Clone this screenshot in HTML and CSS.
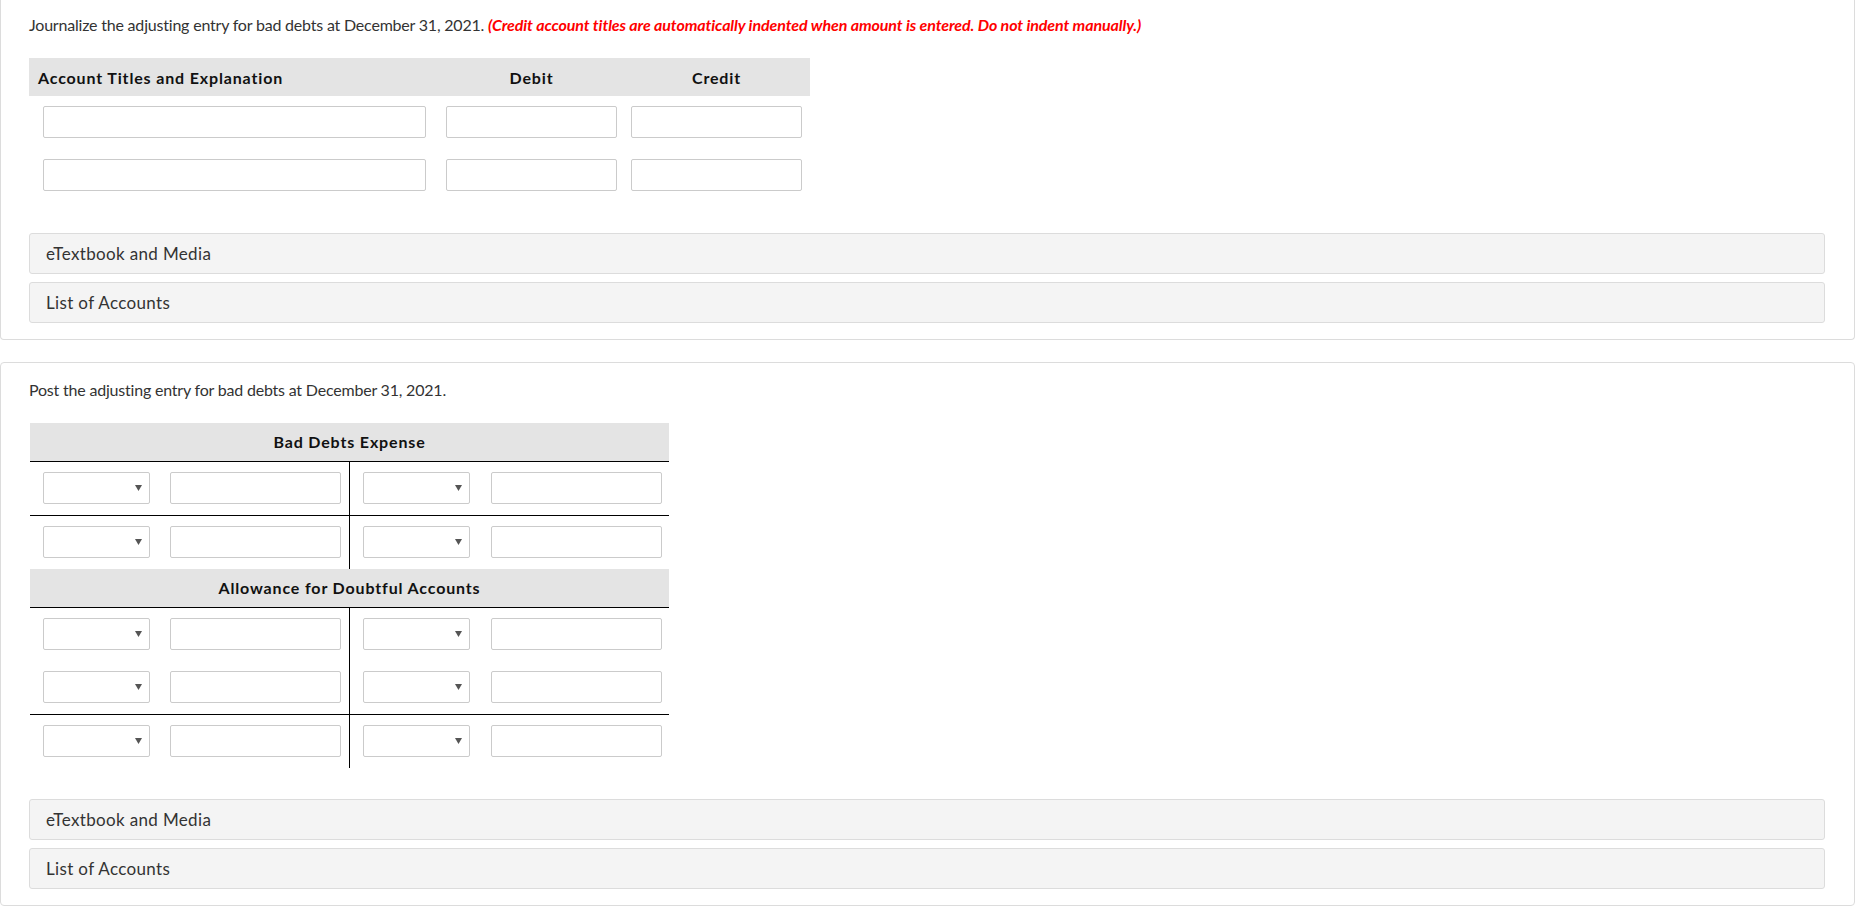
FILE: index.html
```html
<!DOCTYPE html>
<html lang="en">
<head>
<meta charset="utf-8">
<title>Adjusting entry for bad debts</title>
<link rel="stylesheet" href="styles.css">
</head>
<body>
<div class="page">
  <section class="card card-first">
    <p class="prompt">Journalize the adjusting entry for bad debts at December 31, 2021. <em class="note">(Credit account titles are automatically indented when amount is entered. Do not indent manually.)</em></p>

    <div class="journal">
      <div class="j-head">
        <div class="jh-account">Account Titles and Explanation</div>
        <div class="jh-amount">Debit</div>
        <div class="jh-amount jh-credit">Credit</div>
      </div>
      <div class="j-row">
        <div class="field f-account"></div>
        <div class="field f-amount"></div>
        <div class="field f-amount f-credit"></div>
      </div>
      <div class="j-row">
        <div class="field f-account"></div>
        <div class="field f-amount"></div>
        <div class="field f-amount f-credit"></div>
      </div>
    </div>

    <div class="panels">
      <div class="panel">eTextbook and Media</div>
      <div class="panel">List of Accounts</div>
    </div>
  </section>

  <section class="card card-second">
    <p class="prompt">Post the adjusting entry for bad debts at December 31, 2021.</p>

    <div class="taccounts">
      <div class="t-head">Bad Debts Expense</div>
      <div class="t-row t-line">
        <div class="t-side t-left"><div class="field f-select"><svg class="caret" width="7" height="6" viewBox="0 0 7 6"><path d="M0 0h7L3.5 6z" fill="#555"/></svg></div><div class="field f-amt"></div></div>
        <div class="t-side t-right"><div class="field f-select"><svg class="caret" width="7" height="6" viewBox="0 0 7 6"><path d="M0 0h7L3.5 6z" fill="#555"/></svg></div><div class="field f-amt"></div></div>
      </div>
      <div class="t-row">
        <div class="t-side t-left"><div class="field f-select"><svg class="caret" width="7" height="6" viewBox="0 0 7 6"><path d="M0 0h7L3.5 6z" fill="#555"/></svg></div><div class="field f-amt"></div></div>
        <div class="t-side t-right"><div class="field f-select"><svg class="caret" width="7" height="6" viewBox="0 0 7 6"><path d="M0 0h7L3.5 6z" fill="#555"/></svg></div><div class="field f-amt"></div></div>
      </div>

      <div class="t-head">Allowance for Doubtful Accounts</div>
      <div class="t-row">
        <div class="t-side t-left"><div class="field f-select"><svg class="caret" width="7" height="6" viewBox="0 0 7 6"><path d="M0 0h7L3.5 6z" fill="#555"/></svg></div><div class="field f-amt"></div></div>
        <div class="t-side t-right"><div class="field f-select"><svg class="caret" width="7" height="6" viewBox="0 0 7 6"><path d="M0 0h7L3.5 6z" fill="#555"/></svg></div><div class="field f-amt"></div></div>
      </div>
      <div class="t-row t-line">
        <div class="t-side t-left"><div class="field f-select"><svg class="caret" width="7" height="6" viewBox="0 0 7 6"><path d="M0 0h7L3.5 6z" fill="#555"/></svg></div><div class="field f-amt"></div></div>
        <div class="t-side t-right"><div class="field f-select"><svg class="caret" width="7" height="6" viewBox="0 0 7 6"><path d="M0 0h7L3.5 6z" fill="#555"/></svg></div><div class="field f-amt"></div></div>
      </div>
      <div class="t-row">
        <div class="t-side t-left"><div class="field f-select"><svg class="caret" width="7" height="6" viewBox="0 0 7 6"><path d="M0 0h7L3.5 6z" fill="#555"/></svg></div><div class="field f-amt"></div></div>
        <div class="t-side t-right"><div class="field f-select"><svg class="caret" width="7" height="6" viewBox="0 0 7 6"><path d="M0 0h7L3.5 6z" fill="#555"/></svg></div><div class="field f-amt"></div></div>
      </div>
    </div>

    <div class="panels">
      <div class="panel">eTextbook and Media</div>
      <div class="panel">List of Accounts</div>
    </div>
  </section>
</div>
</body>
</html>
```

FILE: styles.css
```css
* { box-sizing: border-box; }

html, body {
  margin: 0;
  padding: 0;
  background: #fff;
}

body {
  font-family: Lato, "Open Sans", Arial, sans-serif;
  color: #333;
  font-size: 16px;
}

.page {
  width: 1855px;
  display: flex;
  flex-direction: column;
  gap: 22px;
}

.card {
  border: 1px solid #dcdcdc;
  border-radius: 4px;
  padding: 16px 29px 16px 28px;
  background: #fff;
}

.card-first {
  border-top: none;
  border-radius: 0 0 4px 4px;
  padding-top: 15px;
}

.card-second {
  padding-top: 17px;
}

.prompt {
  margin: 0;
  font-size: 16px;
  line-height: 1.2;
  color: #333;
  letter-spacing: -0.2px;
}

.note {
  color: #ff0000;
  font-weight: 700;
  font-style: italic;
  letter-spacing: -0.1px;
}

/* Journal table */
.journal {
  width: 781px;
  margin-top: 24px;
}

.j-head {
  height: 38px;
  background: #e4e4e4;
  display: flex;
  align-items: center;
  padding: 0 7px 0 9px;
  gap: 20px;
  font-weight: 700;
  color: #111;
  line-height: 1.2;
  letter-spacing: 0.85px;
}

.jh-account { width: 388px; }
.jh-amount { width: 171px; text-align: center; }
.jh-credit { margin-left: -6px; }

.j-row {
  display: flex;
  padding: 10px 7px 11px 14px;
  gap: 20px;
}

.field {
  height: 32px;
  border: 1px solid #cbcbcb;
  border-radius: 2px;
  background: #fff;
}

.f-account { width: 383px; }
.f-amount { width: 171px; }
.f-credit { margin-left: -6px; }

/* Panels */
.panels {
  margin-top: 31px;
  display: flex;
  flex-direction: column;
  gap: 8px;
}

.panel {
  background: #f4f4f4;
  border: 1px solid #dcdcdc;
  border-radius: 3px;
  padding: 9px 16px;
  font-size: 17px;
  line-height: 21px;
  color: #333;
  letter-spacing: 0.35px;
}

/* T-accounts */
.taccounts {
  width: 639px;
  margin-left: 1px;
  margin-top: 24px;
}

.t-head {
  height: 39px;
  background: #e4e4e4;
  border-bottom: 1px solid #000;
  display: flex;
  align-items: center;
  justify-content: center;
  padding-bottom: 1px;
  font-weight: 700;
  color: #111;
  line-height: 1.2;
  letter-spacing: 0.85px;
}

.t-row {
  display: flex;
  height: 53px;
}

.t-row.t-line {
  height: 54px;
  border-bottom: 1px solid #000;
}

.t-side {
  display: flex;
  align-items: flex-start;
  padding-top: 10px;
}

.t-left {
  width: 320px;
  border-right: 1px solid #000;
  padding-left: 13px;
  gap: 20px;
}

.t-right {
  width: 319px;
  padding-left: 13px;
  gap: 21px;
}

.f-select {
  width: 107px;
  display: flex;
  align-items: center;
  justify-content: flex-end;
  padding-right: 7px;
}

.f-amt { width: 171px; }

.caret { display: block; }
```
